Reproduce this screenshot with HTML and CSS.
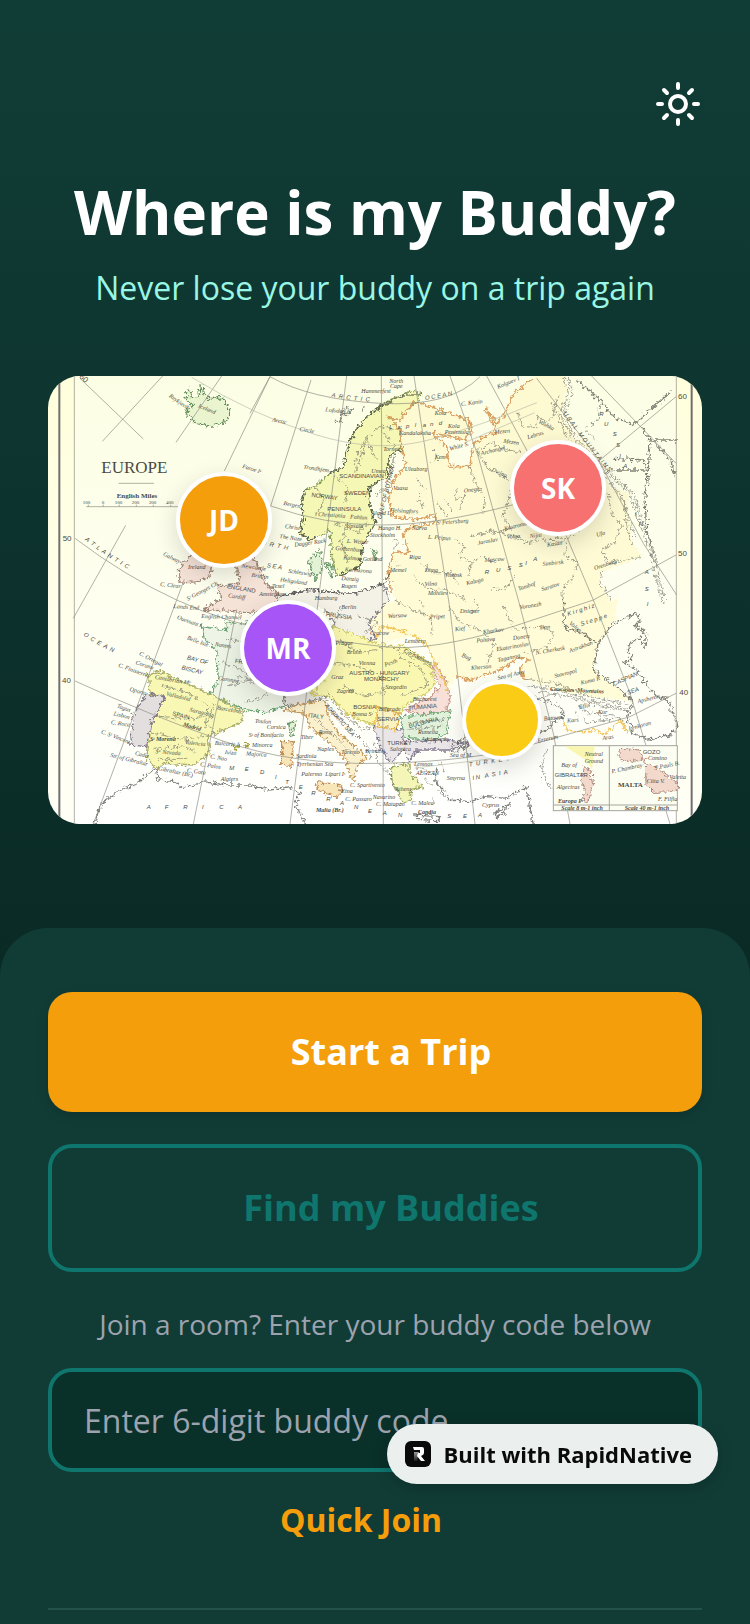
FILE: index.html
```html
<!DOCTYPE html>
<html lang="en">
<head>
    <meta charset="UTF-8">
    <meta name="viewport" content="width=device-width, initial-scale=1.0">
    <title>Where is my Buddy?</title>
    <link rel="stylesheet" href="styles.css">
</head>
<body>
    <header class="hero">
        <button type="button" class="theme-toggle" aria-label="Switch theme">
            <svg viewBox="0 0 48 48" width="48" height="48">
                <circle cx="24" cy="24" r="8"/>
                <path d="M24 4v4M24 40v4M4 24h4M40 24h4M10 10l3 3M35 35l3 3M10 38l3-3M35 13l3-3"/>
            </svg>
        </button>
        <h1>Where is my Buddy?</h1>
        <p class="tagline">Never lose your buddy on a trip again</p>

        <div class="map">
            <svg class="map-art" viewBox="0 0 1962 1344" preserveAspectRatio="xMidYMid slice" role="img" aria-label="Map of Europe">
                <defs>
                    <linearGradient id="paper" x1="0" y1="0" x2="0" y2="1">
                        <stop offset="0" stop-color="#fcfee4"/>
                        <stop offset="0.55" stop-color="#fefff0"/>
                        <stop offset="1" stop-color="#ffffff"/>
                    </linearGradient>
                    <linearGradient id="margin" x1="0" y1="0" x2="0" y2="1">
                        <stop offset="0" stop-color="#ffffdc"/>
                        <stop offset="1" stop-color="#fffff6"/>
                    </linearGradient>
                    <linearGradient id="steppe" x1="0" y1="0" x2="0" y2="1">
                        <stop offset="0" stop-color="#fdf9d0"/>
                        <stop offset="1" stop-color="#fffcd8"/>
                    </linearGradient>
                    <filter id="coast" x="-5%" y="-5%" width="110%" height="110%">
                        <feTurbulence type="fractalNoise" baseFrequency="0.09" numOctaves="2" seed="4"/>
                        <feDisplacementMap in="SourceGraphic" scale="24" xChannelSelector="R" yChannelSelector="G"/>
                    </filter>
                    <path id="atlantic" d="M110 492Q210 570 330 625"/>
                    <path id="ocean" d="M106 778Q170 825 262 852"/>
                    <path id="arctic" d="M850 62Q940 80 1022 76"/>
                    <path id="arctic-ocean" d="M1132 72Q1180 66 1240 50"/>
                    <path id="ural" d="M1545 112Q1600 190 1660 262T1800 400"/>
                </defs>

                <rect width="1962" height="1344" fill="url(#margin)"/>
                <rect x="79" width="1806" height="1344" fill="url(#paper)"/>

                <!-- countries -->
                <g class="land" filter="url(#coast)">
                    <path fill="url(#steppe)" stroke="none" d="M1096 77L1166 97 1261 132 1271 172 1246 192 1186 177 1151 172 1196 212 1206 272 1266 272 1276 202 1326 172 1341 177 1336 147 1311 92 1346 142 1371 112 1396 52 1456 7 1466-20H1546L1556 42 1536 112 1576 182 1626 222 1666 282 1686 332 1746 352 1736 382 1756 502 1781 542 1706 572 1661 587 1656 622 1686 672 1706 672 1701 737 1651 802 1636 882 1706 932 1756 977 1566 952 1426 912 1416 872 1441 852 1416 842 1356 882 1266 912 1226 902 1200 940 1151 862 1146 822 1106 782 986 802 961 742 986 692 1046 672 1021 592 1036 527 1081 532 1066 472 1086 452 1161 442V417L1036 422 1021 372 1036 312 1071 272 1056 162 1021 122 1066 122Z"/>
                    <path fill="#f4f1e6" stroke="#85818a" d="M640 690L700 660 756 648 786 640 876 652 930 650 1006 622 1021 672 961 742 986 792 940 790 856 752 830 800 860 740 830 700 760Z"/>
                    <path fill="#eff5e6" stroke="#6da474" d="M461 752L536 762 531 737 590 745 640 700 700 760 770 850 760 900 720 940 710 990 650 1010 590 1000 486 957 511 912 506 822 470 790Z"/>
                    <path fill="#e6e4dc" stroke="#8a8a80" d="M710 930L780 940 850 900 840 960 760 985 710 990Z"/>
                    <path fill="#f8f8b4" stroke="#a8ac66" d="M301 897L341 887 481 952 586 1007 581 1037 481 1082 486 1132 436 1167 356 1162 326 1177 296 1147 301 1112 311 1042 351 962 306 952Z"/>
                    <path fill="#e4dfdf" stroke="#82788a" d="M296 954L351 962 311 1042 296 1112 246 1107 256 1042 251 1022Z"/>
                    <path fill="#f5f7b4" stroke="#88a058" d="M1096 42L1121 57 1106 77 1076 102 1056 132 1021 122 1056 162 1061 222 1026 237 1016 302 966 332 961 372 981 442 946 502 936 572 866 602 851 542 846 462 821 477 786 492 756 472 766 432 761 382 771 342 806 327 846 292 886 272 901 212 916 172 956 122 996 92 1036 67 1066 57Z"/>
                    <path fill="#faf8b0" stroke="#cfc868" d="M856 752L986 802 1066 812 1146 862 1161 922 1136 952 1076 982 1056 1012 986 992 981 1052 896 1012 846 962 786 952 830 910 800 870Z"/>
                    <path fill="#f6e0d8" stroke="#c99a8e" d="M1071 1002L1146 962 1176 932 1151 872 1166 862 1196 922 1206 972 1196 1002 1126 1017Z"/>
                    <path fill="#e2f1da" stroke="#74ab7c" d="M1061 1022L1126 1017 1206 1002 1196 1072 1146 1097 1066 1082Z"/>
                    <path fill="#fbf2c2" stroke="#e0a640" d="M986 992L1056 1012 1046 1062 991 1052Z"/>
                    <path fill="#eae5e6" stroke="#827a90" d="M976 1052L1061 1062 1066 1097 1196 1092 1256 1102 1206 1122 1106 1122 1086 1152 1066 1120 1030 1162 1000 1120Z"/>
                    <path fill="#f4f6b8" stroke="#98a45c" d="M1031 1172L1086 1162 1086 1192 1126 1232 1086 1242 1091 1272 1066 1282 1046 1242 1031 1212Z"/>
                    <path fill="#fbf1cc" stroke="#c79a5c" d="M706 1002L766 982 830 975 846 1032 871 1072 906 1102 956 1142 926 1172 916 1217 896 1172 896 1152 846 1102 786 1052 771 1012Z"/>
                    <path fill="#f9e6b8" stroke="#c0905c" d="M806 1217L881 1227 874 1267 811 1242ZM701 1097L736 1097 731 1172 701 1167Z"/>
                    <path fill="#e3f1d4" stroke="#6f9a70" d="M721 1042L741 1037 731 1082ZM781 552L816 522 821 582 801 612ZM834 562L856 572 850 602ZM972 520L988 528 980 550Z"/>
                    <path fill="#f6e3d8" stroke="#a08878" d="M421 542L476 537 491 562 486 602 446 617 396 622 391 582ZM560 560L620 545 650 620 690 650 680 700 600 710 466 700 520 670 510 630 575 620Z"/>
                    <path fill="#eaf5d0" stroke="#5d8a58" d="M421 37L431 62 451 62 461 27 466 52 481 72 501 62 531 72 546 107 536 137 486 152 446 142 426 122 411 102 436 92 411 67Z"/>
                    <path fill="#f3efb0" stroke="#a0a040" d="M556 1112L575 1108 566 1124ZM590 1102L604 1106 596 1114Z"/>
                </g>

                <!-- orange and yellow frontiers -->
                <g class="frontier" filter="url(#coast)">
                    <path d="M1096 77L1076 102 1056 132 1021 122 1056 162 1071 272 1036 312 1021 372 1036 422 1110 430 1161 417 1161 442 1086 452 1066 472 1081 532 1036 527 1021 592 1030 650"/>
                    <path d="M1096 77L1166 97 1261 132 1271 172 1246 192 1186 177 1151 172 1196 212 1206 272 1266 272 1276 202 1326 172 1341 177 1336 147 1311 92 1346 142 1371 112 1396 52 1456 7"/>
                    <path class="gold" d="M986 790L1000 750 1046 760 1106 782 1146 822 1160 862 1200 940M986 992L981 1052 1046 1062"/>
                    <path d="M1226 902L1266 912 1356 882 1416 842 1441 852 1416 872 1426 912"/>
                    <path class="gold" d="M1546 1022L1556 1062 1606 1067 1651 1062 1671 1077 1716 1032 1741 1072"/>
                </g>

                <!-- coastlines, rivers and ranges -->
                <g class="ink" filter="url(#coast)">
                    <path class="heavy" d="M141 1344L161 1282 216 1242 266 1222 321 1177 331 1212 381 1217 406 1237 466 1217 536 1227 606 1227 666 1242 726 1232 756 1252 741 1277 775 1350"/>
                    <path class="heavy" d="M1166 1172L1161 1212 1206 1272 1266 1277 1316 1262 1376 1267 1436 1232 1456 1350M1341 1312L1391 1280 1366 1312 1346 1322Z"/>
                    <path class="heavy" d="M1706 737L1766 712 1776 732 1761 752 1796 772 1791 812 1776 782 1746 802 1741 822 1751 852 1726 857 1766 882 1786 912 1826 962 1856 967 1876 1012 1891 1052 1866 1077 1806 1092 1756 1072 1736 1022 1756 977 1706 932 1636 882 1651 802 1701 737"/>
                    <path class="heavy" d="M1546 672L1550 755 1600 770 1646 802M1101 1317L1176 1322 1170 1334 1106 1330Z"/>
                    <path class="heavy" d="M1461 960L1540 995 1550 1022 1520 1035 1500 1060 1460 1075M1206 1112L1250 1085 1262 1110 1220 1125"/>
                    <path class="heavy" d="M1061 222L1026 237 1016 302 966 332 961 372 981 442 946 502 936 572 866 602M771 342L761 382 766 432 756 472 786 492 821 477M846 292L886 272 901 212 916 172 956 122 996 92 1066 57 1121 57"/>
                    <path class="heavy" d="M700 660L756 648 786 640 876 652 930 650 1006 622 1026 592M880 110L900 96 912 104 898 118ZM860 140L876 130 884 140M940 106L948 92"/>
                    <path d="M1546 0L1561 52 1536 112 1576 192 1666 282 1746 352 1766 422 1806 522 1841 680M1560 0L1575 52 1546 112 1586 192 1676 282 1756 352 1776 422 1816 522 1851 680M1530 60L1520 100 1560 190 1640 270 1720 360 1760 480"/>
                    <path class="heavy" d="M1586 12L1666 82 1696 122 1756 147 1806 102 1866 47M1781 157L1806 192 1884 192M1820 200L1866 250 1881 300M1696 247L1786 252 1796 282 1696 282 1666 290M1806 192L1801 282 1791 362 1796 462 1816 542"/>
                    <path d="M1656 80L1650 130 1610 160 1640 190M1500 140L1470 120 1466 155 1420 150 1410 110M1512 80L1520 120 1500 140M1281 232L1330 200 1370 220 1420 230M1286 222L1320 280 1380 310M1420 280L1400 300"/>
                    <path d="M1266 482L1330 462 1360 472 1400 480 1436 500 1500 490 1550 492 1600 460M1556 500L1550 540 1590 560 1570 610 1545 640 1546 672M1270 560L1300 540 1340 560M1400 600L1370 640 1330 640M1661 587L1656 622 1690 672"/>
                    <path d="M1406 300L1366 420 1390 460 1340 470 1270 480M1266 270L1280 320 1310 360 1305 410M1680 352L1690 410 1720 450 1700 500 1660 520 1680 560 1740 550 1780 545M1725 370L1735 440 1750 500 1730 520"/>
                    <path d="M1156 222L1166 252 1150 260M1230 330L1220 370 1250 360 1235 400M1106 310L1130 340 1110 360 1125 400M1166 380L1196 420 1210 400 1190 370M1220 490L1250 510 1230 540 1270 560 1260 600M1116 560L1160 590 1210 590 1230 620M1096 600L1140 640 1190 640 1250 670"/>
                    <path d="M1040 672L1090 700 1146 720 1150 780M1200 690L1240 740 1290 760 1340 800 1320 860M1366 690L1400 760 1480 750 1520 770 1500 810 1430 830M1266 720L1290 690 1280 672M1130 690L1110 672"/>
                    <path d="M1430 910L1520 920 1620 960 1740 985M1440 930L1530 940 1630 975 1740 1000M1470 950L1560 960 1660 990 1750 1010M1590 990L1620 1010 1700 1020 1730 1040M1580 1010L1620 1040 1690 1030"/>
                    <path d="M1496 1120L1480 1170 1500 1230 1520 1240"/>
                    <path d="M916 270L950 190 1000 150 1040 160M920 290L940 240 960 180M860 300L900 330 890 380M960 200L985 250M1000 160L1050 230M1040 240L1020 320 985 360M900 440L880 500 900 560M860 440L930 470 960 440M800 330L830 370 800 420"/>
                    <path d="M606 752L640 780 620 830 660 860M540 790L600 800 580 860 640 900M520 860L580 880 620 930M540 930L640 900 660 960 590 980M560 900L700 930"/>
                    <path d="M340 930L420 950 480 990 470 1060M330 1020L420 1030 470 1020M310 1070L400 1090 480 1080M320 1120L400 1110 450 1130M330 1150L420 1150M500 980L480 1040 500 1080"/>
                    <path d="M870 790L940 830 1030 810 1100 850M850 860L930 870 1000 900 1010 960M880 930L950 960 1000 950M1050 840L1120 880 1140 930 1060 960M1080 820L1140 870M700 780L760 790 800 760M880 690L860 740M930 720L990 740 950 770M1080 1060L1180 1050M1090 1040L1190 1030"/>
                    <path d="M830 960L850 1010 900 1050 950 1100 970 1150M840 950L880 1010 940 1060 976 1052M976 1100L990 1160 1030 1200 1040 1240M800 1030L870 1090 920 1140"/>
                    <path d="M1106 1172L1140 1190 1160 1180M1130 1210L1150 1230M1166 1240L1190 1262M1106 1130L1090 1150M1176 1160L1190 1190M1150 1260L1160 1280M1036 492L1052 500 1040 515M1040 560L1055 570"/>
                </g>

                <!-- graticule -->
                <g class="grid">
                    <path d="M96 7L286 189M344 0L163 196M521 0L384 199M667 0L529 285M233 448L76 727M409 610L136 1344M566 700L436 1344M789 12L668 390M896 0L726 1344M1000 0L1006 1344M1098 0L1156 382 1206 700 1281 1344M1206 0L1290 240 1411 672 1516 1072 1566 1344M1316 0L1436 222 1556 482 1636 672 1746 952 1866 1344M1466 7L1646 242 1786 502 1886 657M1631 0L1884 262"/>
                    <path d="M606 112L666 2Q786 70 996 82T1296 2M668 390Q830 447 1000 447T1400 385L1656 252 1884 62M81 487Q230 600 386 672T700 770T1006 812T1400 750L1636 672 1884 537M81 915Q300 1015 516 1092T1006 1162T1446 1107L1746 1022 1884 952"/>
                    <path class="faint" d="M431 4Q620 120 806 177T1150 190T1466 80M1250 200L1460 110M1100 1176L1400 1140"/>
                    <path d="M79 0V1344M1885 0V1344"/>
                    <path class="frame" d="M34 0V1344M1931 0V1344"/>
                    <path d="M212 322H318M115 392H396M121 386v6M166 386v6M214 386v6M265 386v6M316 386v6M368 386v6"/>
                </g>

                <!-- Gibraltar and Malta insets -->
                <g class="inset">
                    <rect x="1516" y="1109" width="372" height="195"/>
                    <path d="M1684 1109V1304M1516 1287H1888"/>
                    <path class="tint-yellow" d="M1550 1111H1640L1632 1180 1610 1150Z"/>
                    <g filter="url(#coast)">
                        <path class="tint-pink" d="M1606 1172L1628 1180 1634 1230 1618 1280 1604 1276 1612 1240 1600 1210ZM1716 1117L1776 1122 1784 1147 1750 1158 1716 1150ZM1792 1162L1830 1177 1880 1217 1896 1227 1880 1247 1816 1249 1794 1227ZM1780 1150L1796 1148 1790 1162Z"/>
                    </g>
                </g>

                <!-- lettering -->
                <g class="title">
                    <text class="europe" x="259" y="291" text-anchor="middle">EUROPE</text>
                    <text class="miles" x="267" y="366" text-anchor="middle">English Miles</text>
                    <text class="scale" x="104" y="385">100</text>
                    <text class="scale" x="161" y="385">0</text>
                    <text class="scale" x="200" y="385">100</text>
                    <text class="scale" x="251" y="385">200</text>
                    <text class="scale" x="302" y="385">300</text>
                    <text class="scale" x="354" y="385">400</text>
                    <text class="degree" x="44" y="495">50</text>
                    <text class="degree" x="42" y="922">40</text>
                    <text class="degree" x="1890" y="70">60</text>
                    <text class="degree" x="1890" y="540">50</text>
                    <text class="degree" x="1894" y="957">40</text>
                    <text class="degree" transform="translate(92 4) rotate(42)">60</text>
                </g>
                <g class="seas">
                    <text><textPath href="#atlantic">A &#160;T &#160;L &#160;A &#160;N &#160;T &#160;I &#160;C</textPath></text>
                    <text><textPath href="#ocean">O &#160;C &#160;E &#160;A &#160;N</textPath></text>
                    <text><textPath href="#arctic">A &#160;R &#160;C &#160;T &#160;I &#160;C</textPath></text>
                    <text><textPath href="#arctic-ocean">O C E A N</textPath></text>
                    <text x="544 590 636 681 712 752 790 835 876 918 960 1004 1050" y="1182 1186 1194 1208 1223 1238 1258 1275 1288 1300 1310 1318 1323">MEDITERRANEAN</text>
                    <text x="1198 1245 1290" y="1326 1326 1322">SEA</text>
                    <text><textPath href="#ural">U R A L &#160; M O U N T A I N S</textPath></text>
                    <text x="1310 1344 1378 1412 1432 1456" y="594 588 582 574 568 556">RUSSIA</text>
                    <text x="296 350 406 462 514 570" y="1298">AFRICA</text>
                    <text transform="translate(1264 1172) rotate(-9)">T &#160;U &#160;R &#160;K &#160;E &#160;Y</text>
                    <text transform="translate(1274 1212) rotate(-10)">I N &#160; A &#160;S &#160;I &#160;A</text>
                    <text transform="translate(640 505) rotate(12)">O &#160;R &#160;T &#160;H</text>
                    <text transform="translate(656 574) rotate(8)">S E A</text>
                    <text transform="translate(416 850) rotate(14)">BAY OF</text>
                    <text transform="translate(400 880) rotate(14)">BISCAY</text>
                    <text transform="translate(1000 430) rotate(-76)">GULF OF BOTHNIA</text>
                    <text x="1654 1668 1694 1704 1714 1726" y="120 150 180 212 246 276">RUSSIA</text>
                    <text x="1760 1772 1790 1790 1796" y="420 450 594 644 690">INASI</text>
                    <text transform="translate(1698 930) rotate(-24)">CASPIAN</text>
                    <text transform="translate(1740 956) rotate(-20)">SEA</text>
                    <text transform="translate(830 990) rotate(48)">ADRIATIC SEA</text>
                    <text x="1024 1048 1074 1100 1124 1146 1172" y="160 158 156 154 152 150 148">Lapland</text>
                    <text transform="translate(1560 720) rotate(-18)">K i r g h i z</text>
                    <text transform="translate(1600 750) rotate(-18)">S t e p p e</text>
                </g>
                <g class="states">
                    <text transform="translate(790 362) rotate(8)">NORWAY</text>
                    <text x="888" y="358">SWEDEN</text>
                    <text x="874" y="305">SCANDINAVIAN</text>
                    <text x="838" y="404">PENINSULA</text>
                    <text transform="translate(372 1018) rotate(14)">SPAIN</text>
                    <text transform="translate(833 720) rotate(8)">PRUSSIA</text>
                    <text x="904" y="896">AUSTRO - HUNGARY</text>
                    <text x="948" y="914">MONARCHY</text>
                    <text transform="translate(780 1024) rotate(6)">ITALY</text>
                    <text transform="translate(1084 1002) rotate(-5)">RUMANIA</text>
                    <text transform="translate(1084 1056) rotate(-14)">BULGARIA</text>
                    <text x="988" y="1034">SERVIA</text>
                    <text x="1018" y="1106">TURKEY</text>
                    <text x="916" y="1000">BOSNIA</text>
                    <text transform="translate(536 636) rotate(10)">ENGLAND</text>
                    <text transform="translate(560 860) rotate(8)">FRANCE</text>
                    <text x="1520" y="1203">GIBRALTAR</text>
                    <text class="bold malta" x="1710" y="1234">MALTA</text>
                    <text x="1784" y="1134">GOZO</text>
                </g>
                <g class="places">
                    <text transform="translate(362 62) rotate(35)">Reykjavik</text>
                    <text transform="translate(450 94) rotate(22)">Iceland</text>
                    <text transform="translate(582 275) rotate(18)">Faroe Iˢ</text>
                    <text transform="translate(672 136) rotate(12)">Arctic</text>
                    <text transform="translate(754 164) rotate(10)">Circle</text>
                    <text transform="translate(940 50)">Hammerfest</text>
                    <text transform="translate(1024 22)">North</text>
                    <text transform="translate(1026 36)">Cape</text>
                    <text transform="translate(832 106) rotate(6)">Lofoden Iˢ</text>
                    <text transform="translate(766 278) rotate(8)">Trondhjem</text>
                    <text transform="translate(706 386) rotate(12)">Bergen</text>
                    <text transform="translate(710 456) rotate(8)">Christ</text>
                    <text transform="translate(694 486) rotate(8)">The Naze</text>
                    <text transform="translate(740 512) rotate(-8)">Dagger Rack</text>
                    <text transform="translate(810 420) rotate(4)">Christiania</text>
                    <text transform="translate(906 428) rotate(3)">Fahlun</text>
                    <text transform="translate(894 456)">Upsala</text>
                    <text transform="translate(896 500) rotate(4)">L. Wetter</text>
                    <text transform="translate(862 522) rotate(4)">Gothenburg</text>
                    <text transform="translate(886 550) rotate(4)">Kalmar</text>
                    <text transform="translate(966 482)">Stockholm</text>
                    <text transform="translate(970 416)">Aland I.</text>
                    <text transform="translate(970 290)">Umea</text>
                    <text transform="translate(1006 224)">Tornea</text>
                    <text transform="translate(1070 284)">Uleaborg</text>
                    <text transform="translate(1036 342)">Vaasa</text>
                    <text transform="translate(1026 408) rotate(3)">Helsingfors</text>
                    <text transform="translate(990 462)">Hango H.</text>
                    <text transform="translate(1054 178)">Kandalaksha</text>
                    <text transform="translate(1200 156)">Kola</text>
                    <text transform="translate(1190 174)">Peninsula</text>
                    <text transform="translate(1160 116)">Kola</text>
                    <text transform="translate(1206 224) rotate(-16)">White S.</text>
                    <text transform="translate(1160 248)">Kem</text>
                    <text transform="translate(1166 446) rotate(-4)">Sᵗ Petersburg</text>
                    <text transform="translate(1092 462)">Narva</text>
                    <text transform="translate(1140 488) rotate(4)">L. Peipus</text>
                    <text transform="translate(1084 550)">Riga</text>
                    <text transform="translate(1130 588)">Duna</text>
                    <text transform="translate(1026 588)">Memel</text>
                    <text transform="translate(1130 630) rotate(-3)">Vilna</text>
                    <text transform="translate(1190 602)">Vitebsk</text>
                    <text transform="translate(1140 656)">Mohilev</text>
                    <text transform="translate(1248 350) rotate(-8)">Onega</text>
                    <text transform="translate(1240 90) rotate(-8)">C. Kanin</text>
                    <text transform="translate(1350 38) rotate(-22)">Kolguev I</text>
                    <text transform="translate(1340 174) rotate(-6)">Mezen</text>
                    <text transform="translate(1366 200) rotate(8)">Mezen</text>
                    <text transform="translate(1440 190) rotate(-18)">Lebrus</text>
                    <text transform="translate(1470 140) rotate(28)">Vashka</text>
                    <text transform="translate(1300 238) rotate(-14)">Archangel</text>
                    <text transform="translate(1330 285) rotate(24)">Dwina</text>
                    <text transform="translate(1370 464) rotate(-14)">Kostroma</text>
                    <text transform="translate(1376 488) rotate(-4)">Volga</text>
                    <text transform="translate(1290 506) rotate(-10)">Jaroslav</text>
                    <text transform="translate(1498 512) rotate(-8)">Kasan</text>
                    <text transform="translate(1484 570) rotate(-6)">Simbirsk</text>
                    <text transform="translate(1446 486) rotate(-6)">Nijni</text>
                    <text transform="translate(1646 482) rotate(-14)">Ufa</text>
                    <text transform="translate(1640 582) rotate(-18)">Orenburg</text>
                    <text transform="translate(1310 558) rotate(-4)">Moscow</text>
                    <text transform="translate(1412 644) rotate(-18)">Tambof</text>
                    <text transform="translate(1482 646) rotate(-18)">Saratov</text>
                    <text transform="translate(1256 628) rotate(-14)">Kaluga</text>
                    <text transform="translate(1416 700) rotate(-10)">Voronezh</text>
                    <text transform="translate(1476 760) rotate(-4)">Don</text>
                    <text transform="translate(1306 774) rotate(-8)">Kharkov</text>
                    <text transform="translate(1286 800) rotate(-6)">Poltava</text>
                    <text transform="translate(1396 792) rotate(-8)">Donetz</text>
                    <text transform="translate(1346 826) rotate(-10)">Ekaterinoslav</text>
                    <text transform="translate(1464 836) rotate(-10)">N. Cherkask</text>
                    <text transform="translate(1350 858) rotate(-12)">Taganrog</text>
                    <text transform="translate(1566 830) rotate(-20)">Astrakhan</text>
                    <text transform="translate(1562 744) rotate(38)">Volga</text>
                    <text transform="translate(1520 906) rotate(-14)">Stavropol</text>
                    <text transform="translate(1600 926) rotate(-14)">Kuma R</text>
                    <text class="bold" transform="translate(1506 944) rotate(3)">Caucasus &#160;Mountains</text>
                    <text transform="translate(1592 1000) rotate(-14)">Tiflis</text>
                    <text transform="translate(1650 1014)">Kur</text>
                    <text transform="translate(1488 1034) rotate(-6)">Batoum</text>
                    <text transform="translate(1558 1040) rotate(-6)">Kars</text>
                    <text transform="translate(1664 1092) rotate(-8)">Aras</text>
                    <text transform="translate(1744 1064) rotate(-16)">Lenkoran</text>
                    <text transform="translate(1770 982) rotate(-14)">Apsheron</text>
                    <text transform="translate(1470 1100) rotate(-12)">Erzerum</text>
                    <text transform="translate(1350 912) rotate(-14)">Sea of Azov</text>
                    <text transform="translate(1270 882) rotate(-6)">Kherson</text>
                    <text transform="translate(1020 726) rotate(-3)">Warsaw</text>
                    <text transform="translate(1146 728) rotate(-2)">Pripet</text>
                    <text transform="translate(1236 712)">Dnieper</text>
                    <text transform="translate(1222 766) rotate(-8)">Kief</text>
                    <text transform="translate(1070 800)">Lemberg</text>
                    <text transform="translate(1066 828) rotate(26)">Carpathians</text>
                    <text transform="translate(1240 842) rotate(20)">Bug</text>
                    <text transform="translate(966 776)">Cracow</text>
                    <text transform="translate(862 808)">Prague</text>
                    <text transform="translate(896 834)">Brunn</text>
                    <text transform="translate(932 866)">Vienna</text>
                    <text transform="translate(1012 872) rotate(-20)">Pesth</text>
                    <text transform="translate(1012 938)">Szegedin</text>
                    <text transform="translate(850 908)">Graz</text>
                    <text transform="translate(866 950)">Zagreb</text>
                    <text transform="translate(912 1020)">Bosna Sᵗ</text>
                    <text transform="translate(992 1006)">Belgrade</text>
                    <text transform="translate(1094 976)">Bucharest</text>
                    <text transform="translate(1110 1074)">Rumelia</text>
                    <text transform="translate(1120 1094)">Adrianople</text>
                    <text transform="translate(1206 1144)">Sea of M.</text>
                    <text transform="translate(1026 1126)">Salonica</text>
                    <text transform="translate(1098 1170)">Lemnos</text>
                    <text transform="translate(1104 1196)">AEGEAN</text>
                    <text transform="translate(1196 1212)">Smyrna</text>
                    <text transform="translate(1042 1244)">Athens</text>
                    <text transform="translate(1090 1286)">C. Malea</text>
                    <text transform="translate(974 1268)">Navarino</text>
                    <text transform="translate(984 1290)">C. Matapan</text>
                    <text class="bold" transform="translate(1110 1314)">Candia</text>
                    <text transform="translate(1302 1292)">Cyprus</text>
                    <text transform="translate(812 1074)">Rome</text>
                    <text transform="translate(758 1088)">Tiber</text>
                    <text transform="translate(808 1126)">Naples</text>
                    <text transform="translate(880 1134)">Tarento</text>
                    <text transform="translate(952 1132)">Brindisi</text>
                    <text transform="translate(744 1146)">Sardinia</text>
                    <text transform="translate(746 1170)">Tyrrhenian Sea</text>
                    <text transform="translate(760 1200)">Palermo</text>
                    <text transform="translate(832 1200)">Lipari Iˢ</text>
                    <text transform="translate(880 1252)">Etna</text>
                    <text transform="translate(906 1232)">C. Spartivento</text>
                    <text transform="translate(892 1276)">C. Passaro</text>
                    <text class="bold" transform="translate(804 1308)">Malta (Br.)</text>
                    <text transform="translate(656 1060)">Corsica</text>
                    <text transform="translate(602 1082)">Sᵗ of Bonifacio</text>
                    <text transform="translate(620 1040) rotate(4)">Toulon</text>
                    <text transform="translate(612 1112)">Minorca</text>
                    <text transform="translate(594 1138) rotate(4)">Majorca</text>
                    <text transform="translate(500 1106) rotate(4)">Balearic I.</text>
                    <text transform="translate(530 1134) rotate(4)">Iviza</text>
                    <text transform="translate(486 1146) rotate(10)">C. Nao</text>
                    <text transform="translate(456 1170) rotate(8)">C. Palos</text>
                    <text transform="translate(518 1216)">Algiers</text>
                    <text transform="translate(416 1188) rotate(8)">C. Gata</text>
                    <text transform="translate(330 1182) rotate(12)">Gibraltar (Br.)</text>
                    <text transform="translate(186 1142) rotate(14)">Str. of Gibraltar</text>
                    <text transform="translate(260 1136) rotate(14)">Cadiz</text>
                    <text transform="translate(158 1072) rotate(20)">C. Sᵗ Vincent</text>
                    <text transform="translate(196 1018) rotate(14)">Lisbon</text>
                    <text transform="translate(188 1044) rotate(8)">C. Roca</text>
                    <text transform="translate(206 994) rotate(20)">Tagus</text>
                    <text transform="translate(244 944) rotate(16)">Oporto</text>
                    <text transform="translate(210 872) rotate(20)">C. Finisterre</text>
                    <text transform="translate(272 836) rotate(28)">C. Ortegal</text>
                    <text transform="translate(262 864) rotate(18)">Coruna</text>
                    <text transform="translate(320 908) rotate(10)">Cantabrian Mᵗˢ</text>
                    <text transform="translate(354 958) rotate(14)">Valladolid</text>
                    <text transform="translate(424 1006) rotate(14)">Saragossa</text>
                    <text class="bold" transform="translate(404 1050) rotate(16)">Madrid</text>
                    <text class="bold" transform="translate(306 1096)">Sᵗ Morena</text>
                    <text transform="translate(410 1104) rotate(6)">Valencia</text>
                    <text transform="translate(322 1132) rotate(4)">Sᵃ Nevada</text>
                    <text transform="translate(506 1000) rotate(10)">Barcelona</text>
                    <text transform="translate(416 790) rotate(20)">Belle Isle</text>
                    <text transform="translate(386 728) rotate(20)">Ouessant I.</text>
                    <text transform="translate(376 696) rotate(4)">Lands End</text>
                    <text transform="translate(460 726) rotate(2)">English Channel</text>
                    <text transform="translate(500 810) rotate(8)">Nantes</text>
                    <text transform="translate(510 912) rotate(8)">Garonne</text>
                    <text transform="translate(344 538) rotate(26)">Galway</text>
                    <text transform="translate(336 630) rotate(6)">C. Clear</text>
                    <text transform="translate(420 674) rotate(-28)">Sᵗ Georges Ch.</text>
                    <text transform="translate(420 580)">Ireland</text>
                    <text transform="translate(540 664) rotate(8)">Cardiff</text>
                    <text transform="translate(610 602) rotate(8)">Britain</text>
                    <text transform="translate(580 574) rotate(8)">Newcastle</text>
                    <text transform="translate(696 616) rotate(8)">Heligoland</text>
                    <text transform="translate(720 590) rotate(8)">Schleswig</text>
                    <text transform="translate(672 636)">Texel</text>
                    <text transform="translate(634 660)">Amsterdam</text>
                    <text transform="translate(800 672)">Hamburg</text>
                    <text transform="translate(880 636)">Rugen</text>
                    <text transform="translate(880 612) rotate(4)">Danzig</text>
                    <text transform="translate(944 556)">Gotland</text>
                    <text transform="translate(890 586) rotate(4)">Karlskrona</text>
                    <text transform="translate(880 700)">Berlin</text>
                    <text transform="translate(1540 1174)">Bay of</text>
                    <text transform="translate(1610 1140)">Neutral</text>
                    <text transform="translate(1610 1162)">Ground</text>
                    <text transform="translate(1526 1240)">Algeciras</text>
                    <text class="bold" transform="translate(1530 1280)">Europa Pᵗ</text>
                    <text class="bold" transform="translate(1540 1302)">Scale 8 m-1 inch</text>
                    <text class="bold" transform="translate(1730 1302)">Scale 40 m-1 inch</text>
                    <text transform="translate(1800 1152)">Comino</text>
                    <text transform="translate(1864 1208)">Valetta</text>
                    <text transform="translate(1820 1182) rotate(-12)">Sᵗ Pauls B.</text>
                    <text transform="translate(1692 1192) rotate(-12)">P. Chambray</text>
                    <text transform="translate(1796 1220)">Citta V.</text>
                    <text transform="translate(1830 1274)">F. Filfla</text>
                </g>
            </svg>

            <span class="pin pin-jd">JD</span>
            <span class="pin pin-sk">SK</span>
            <span class="pin pin-mr">MR</span>
            <span class="pin pin-you"></span>
        </div>
    </header>

    <main class="sheet">
        <button type="button" class="btn btn-primary">Start a Trip</button>
        <button type="button" class="btn btn-outline">Find my Buddies</button>

        <form class="join">
            <label for="code">Join a room? Enter your buddy code below</label>
            <input type="text" id="code" maxlength="6" placeholder="Enter 6-digit buddy code">
            <button type="button" class="quick-join">Quick Join</button>
        </form>

        <hr>
    </main>

    <a class="badge" href="#">
        <svg viewBox="0 0 26 26" width="26" height="26" aria-hidden="true">
            <defs>
                <linearGradient id="leg" x1="0" y1="0" x2="0" y2="1">
                    <stop offset="0" stop-color="#999999"/>
                    <stop offset="1" stop-color="#1c1c1c"/>
                </linearGradient>
            </defs>
            <rect width="26" height="26" rx="6" fill="#0a0a0a"/>
            <path d="M9 11h5l-2 9H9z" fill="url(#leg)"/>
            <path d="M8 6h9q2 0 2 2v4q0 2-3 3l4 5h-4l-4-5 1-3h2V9H9z" fill="#fff"/>
        </svg>
        Built with RapidNative
    </a>
</body>
</html>
```
FILE: styles.css
```css
* {
    box-sizing: border-box;
}

body {
    margin: 0;
    min-height: 100vh;
    background-color: #113c36;
    font-family: "Open Sans", "Noto Sans", sans-serif;
    display: flex;
    flex-direction: column;
}

button, input {
    font-family: inherit;
}

button {
    cursor: pointer;
}

.hero {
    display: flex;
    flex-direction: column;
    padding: 80px 48px 152px;
    background: linear-gradient(#113d37, #0a2a25);
    text-align: center;
}

.theme-toggle {
    align-self: flex-end;
    display: flex;
    padding: 0;
    border: none;
    background: none;
}

.theme-toggle svg {
    fill: none;
    stroke: #fff;
    stroke-width: 4;
    stroke-linecap: round;
}

h1 {
    margin: 48px 0 16px;
    color: #fff;
    font-size: 60px;
    line-height: 72px;
    font-weight: bold;
}

.tagline {
    margin: 0 0 64px;
    color: #99f6e4;
    font-size: 32px;
    line-height: 48px;
}

/* Map */
.map {
    position: relative;
    height: 448px;
    border-radius: 32px;
    overflow: hidden;
}

.map-art {
    display: block;
    width: 100%;
    height: 100%;
}

.land {
    stroke-width: 4;
    stroke-linejoin: round;
}

.frontier {
    fill: none;
    stroke: #d9a062;
    stroke-width: 5;
}

.frontier .gold {
    stroke: #f2c75c;
}

.ink {
    fill: none;
    stroke: #77776c;
    stroke-width: 3;
    opacity: 0.7;
}

.ink .heavy {
    stroke: #4c4c46;
    stroke-width: 4;
}

.grid {
    fill: none;
    stroke: #8b8b80;
    stroke-width: 2;
}

.grid .faint {
    stroke: #b9b9a4;
}

.grid .frame {
    stroke: #6f6f70;
    stroke-width: 6;
}

.inset {
    fill: none;
    stroke: #a5a59c;
    stroke-width: 3;
}

.inset rect {
    fill: #fdfef2;
}

.inset .tint-yellow {
    fill: #f8f6b0;
    stroke: none;
}

.inset .tint-pink {
    fill: #f3d8cc;
    stroke: #a88478;
}

.title, .seas, .states, .places {
    fill: #4a4a44;
    font-family: "Liberation Serif", serif;
}

.europe {
    font-size: 51px;
}

.miles {
    font-size: 21px;
    font-weight: bold;
}

.scale {
    font-size: 15px;
}

.degree {
    font-family: "Liberation Sans", sans-serif;
    font-size: 24px;
}

.seas {
    font-family: "Liberation Sans", sans-serif;
    font-size: 18px;
    font-style: italic;
}

.states {
    font-family: "Liberation Sans", sans-serif;
    font-size: 18px;
}

.states .malta {
    font-family: "Liberation Serif", serif;
    font-size: 21px;
}

.places {
    font-size: 18px;
    font-style: italic;
}

.bold {
    font-weight: bold;
}

.pin {
    position: absolute;
    display: flex;
    align-items: center;
    justify-content: center;
    width: 96px;
    height: 96px;
    border: 4px solid #fff;
    border-radius: 50%;
    box-shadow: 0 8px 24px rgba(0, 0, 0, 0.15);
    color: #fff;
    font-size: 28px;
    font-weight: bold;
}

.pin-jd {
    left: 128px;
    top: 96px;
    background-color: #f59e0b;
}

.pin-sk {
    right: 96px;
    top: 64px;
    background-color: #f87171;
}

.pin-mr {
    left: 192px;
    bottom: 128px;
    background-color: #a855f7;
}

.pin-you {
    right: 160px;
    bottom: 64px;
    width: 80px;
    height: 80px;
    background-color: #facc15;
}

/* Bottom sheet */
.sheet {
    flex-grow: 1;
    display: flex;
    flex-direction: column;
    gap: 32px;
    margin-top: -48px;
    padding: 64px 48px 14px;
    border-radius: 48px 48px 0 0;
    background-color: #113c36;
}

.btn {
    padding: 32px 32px 32px 64px;
    border: none;
    border-radius: 24px;
    font-size: 36px;
    line-height: 56px;
    font-weight: bold;
}

.btn-primary {
    background-color: #f59e0b;
    box-shadow: 0 4px 12px rgba(0, 0, 0, 0.15);
    color: #fff;
}

.btn-outline {
    border: 4px solid #0f766e;
    background: none;
    color: #0f766e;
}

.join {
    display: flex;
    flex-direction: column;
    gap: 24px;
}

.join label {
    color: #9ca3af;
    font-size: 28px;
    line-height: 40px;
    text-align: center;
}

.join input {
    width: 100%;
    height: 104px;
    padding: 0 32px;
    border: 4px solid #0f766e;
    border-radius: 24px;
    background-color: #0a302a;
    color: #fff;
    font-size: 32px;
}

.join input::placeholder {
    color: #9ca3af;
}

.quick-join {
    align-self: center;
    padding: 0 28px 0 0;
    border: none;
    background: none;
    color: #f59e0b;
    font-size: 32px;
    line-height: 48px;
    font-weight: bold;
}

hr {
    width: 100%;
    margin: 32px 0 0;
    border: none;
    border-top: 2px solid #23524b;
}

.badge {
    position: fixed;
    right: 32px;
    bottom: 140px;
    display: flex;
    align-items: center;
    gap: 12px;
    height: 60px;
    padding: 0 26px 0 18px;
    border-radius: 30px;
    background-color: #ebf0ee;
    box-shadow: 0 4px 16px rgba(0, 0, 0, 0.2);
    color: #0a0a0a;
    font-size: 22px;
    font-weight: bold;
    text-decoration: none;
}
```
